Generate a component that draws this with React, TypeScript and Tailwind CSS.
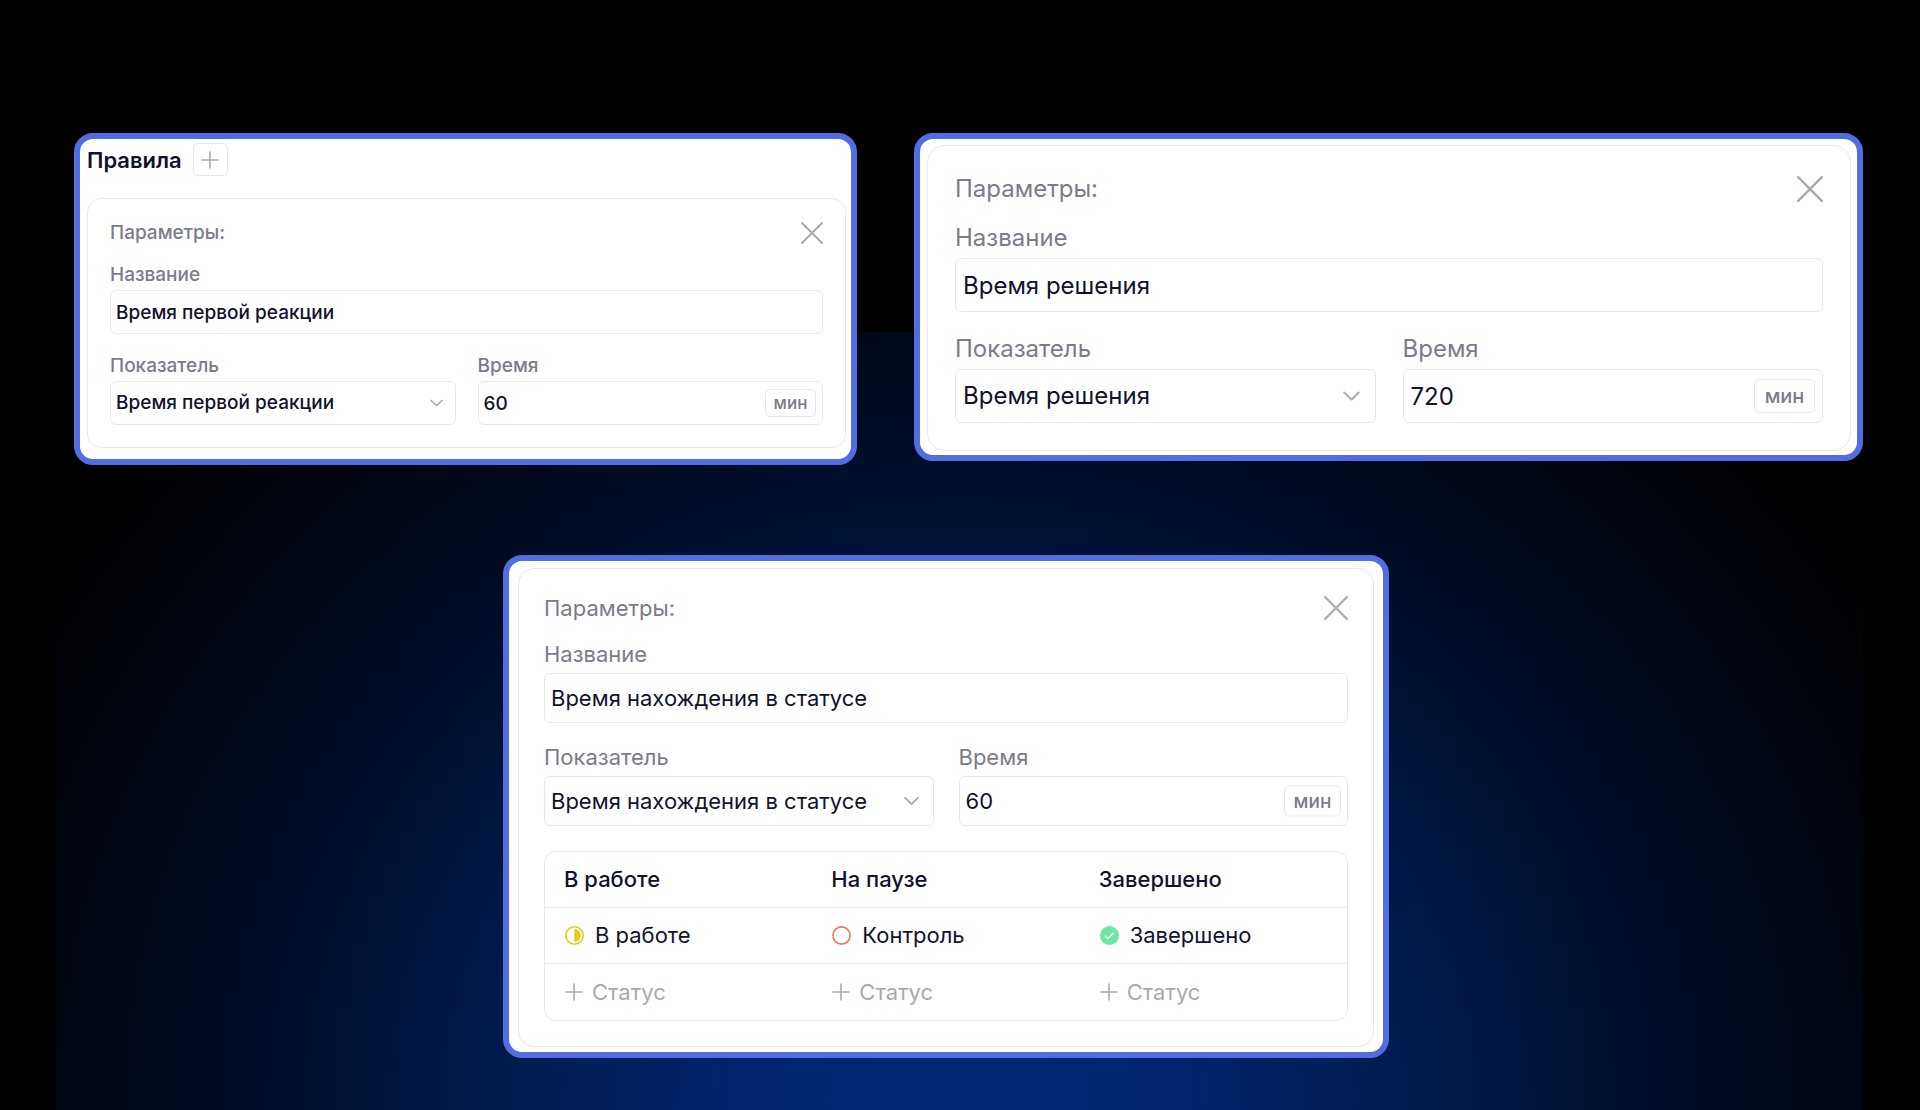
import type { ReactNode } from 'react'

const sizes = {
  sm: {
    text: 'text-[19px] leading-6 font-[450]',
    header: 'h-6',
    panel: 'rounded-[14px] px-[22px] pt-[22px] pb-[22px]',
    gap: 'gap-[22px]',
    name: 'mt-[18px]',
    row: 'mt-[20px]',
    label: 'mb-[3px] h-6',
    input: 'h-11 px-[5px]',
    badge: 'right-[7px] h-7 w-[51px] text-[17px]',
    chevron: 'right-[13px] w-[13px]',
    close: 'size-[22px]',
  },
  md: {
    text: 'text-[22px] leading-7',
    header: 'h-6',
    panel: 'rounded-[16px] px-[25px] pt-[27px] pb-[25px]',
    gap: 'gap-[25px]',
    name: 'mt-[20px]',
    row: 'mt-[20px]',
    label: 'mb-[5px] h-7',
    input: 'h-[50px] px-[6px]',
    badge: 'right-[7px] h-[31px] w-[57px] text-[19px]',
    chevron: 'right-[15px] w-[15px]',
    close: 'size-6',
  },
  lg: {
    text: 'text-[24px] leading-8',
    header: 'h-[26px]',
    panel: 'rounded-[18px] px-[27px] pt-[30px] pb-[27px]',
    gap: 'gap-[27px]',
    name: 'mt-[20px]',
    row: 'mt-[21px]',
    label: 'mb-[4px] h-8',
    input: 'h-[54px] px-[7px]',
    badge: 'right-[8px] h-[34px] w-[61px] text-xl',
    chevron: 'right-[16px] w-[17px]',
    close: 'size-[26px]',
  },
}

type Size = keyof typeof sizes

function CloseIcon({ className }: { className: string }) {
  return (
    <svg viewBox="0 0 22 22" fill="none" stroke="#a9a9b4" strokeWidth="2" strokeLinecap="round" className={className}>
      <path d="M1 1l20 20M21 1L1 21" />
    </svg>
  )
}

function PlusIcon() {
  return (
    <svg viewBox="0 0 18 18" fill="none" stroke="#a9a9b4" strokeWidth="1.6" strokeLinecap="round" className="size-[18px] shrink-0">
      <path d="M9 1v16M1 9h16" />
    </svg>
  )
}

function HalfIcon() {
  return (
    <svg viewBox="0 0 19 19" className="size-[19px] shrink-0">
      <circle cx="9.5" cy="9.5" r="8.7" fill="none" stroke="#ecc41f" strokeWidth="1.6" />
      <path d="M9.3 3a6.5 6.5 0 0 1 0 13z" fill="#ecc41f" />
    </svg>
  )
}

function EmptyIcon() {
  return (
    <svg viewBox="0 0 19 19" className="size-[19px] shrink-0">
      <circle cx="9.5" cy="9.5" r="8.6" fill="none" stroke="#e57864" strokeWidth="1.6" />
    </svg>
  )
}

function DoneIcon() {
  return (
    <svg viewBox="0 0 19 19" className="size-[19px] shrink-0">
      <circle cx="9.5" cy="9.5" r="9.5" fill="#70e6a0" />
      <path d="M5.3 10l2.6 2.6 5.6-5.6" fill="none" stroke="#fff" strokeWidth="1.4" strokeLinecap="round" strokeLinejoin="round" />
    </svg>
  )
}

const statuses = [
  { group: 'В работе', name: 'В работе', icon: <HalfIcon /> },
  { group: 'На паузе', name: 'Контроль', icon: <EmptyIcon /> },
  { group: 'Завершено', name: 'Завершено', icon: <DoneIcon /> },
]

function StatusTable() {
  return (
    <div className="mt-[25px] overflow-hidden rounded-xl border border-[#e8e8ea]">
      <table className="w-full table-fixed text-left">
        <thead>
          <tr className="h-[55px] border-b border-[#e8e8ea]">
            {statuses.map((s) => (
              <th key={s.group} className="px-[19px] font-medium">
                {s.group}
              </th>
            ))}
          </tr>
        </thead>
        <tbody>
          <tr className="h-14 border-b border-[#e8e8ea]">
            {statuses.map((s) => (
              <td key={s.group} className="px-5">
                <span className="flex items-center gap-[11px]">
                  {s.icon}
                  {s.name}
                </span>
              </td>
            ))}
          </tr>
          <tr className="h-[57px]">
            {statuses.map((s) => (
              <td key={s.group} className="px-5">
                <button type="button" className="flex items-center gap-[9px] text-[#a9a9b4]">
                  <PlusIcon />
                  Статус
                </button>
              </td>
            ))}
          </tr>
        </tbody>
      </table>
    </div>
  )
}

interface RuleProps {
  id: string
  size: Size
  name: string
  time: string
  children?: ReactNode
}

function RulePanel({ id, size, name, time, children }: RuleProps) {
  const s = sizes[size]
  const field = `block w-full rounded-[6px] border border-[#e8e8ea] bg-white outline-none ${s.input}`
  const label = `flex items-center text-[#7b7b8b] ${s.label}`

  return (
    <section className={`border border-[#e8e8ea] ${s.panel} ${s.text}`}>
      <div className={`flex items-center justify-between ${s.header}`}>
        <h3 className="font-[inherit] text-[#7b7b8b]">Параметры:</h3>
        <button type="button" aria-label="Закрыть">
          <CloseIcon className={s.close} />
        </button>
      </div>

      <div className={s.name}>
        <label htmlFor={`${id}-name`} className={label}>
          Название
        </label>
        <input id={`${id}-name`} defaultValue={name} className={field} />
      </div>

      <div className={`grid grid-cols-2 ${s.gap} ${s.row}`}>
        <div>
          <label htmlFor={`${id}-metric`} className={label}>
            Показатель
          </label>
          <div className="relative">
            <select id={`${id}-metric`} className={`appearance-none ${field}`}>
              <option>{name}</option>
            </select>
            <svg
              viewBox="0 0 14 8"
              fill="none"
              stroke="#a9a9b4"
              strokeWidth="1.7"
              strokeLinecap="round"
              strokeLinejoin="round"
              className={`pointer-events-none absolute top-1/2 -translate-y-1/2 ${s.chevron}`}
            >
              <path d="M1 1l6 6 6-6" />
            </svg>
          </div>
        </div>
        <div>
          <label htmlFor={`${id}-time`} className={label}>
            Время
          </label>
          <div className="relative">
            <input id={`${id}-time`} defaultValue={time} className={field} />
            <span
              className={`absolute top-1/2 flex -translate-y-1/2 items-center justify-center rounded-[5px] border border-[#e8e8ea] font-medium text-[#7b7b8b] ${s.badge}`}
            >
              мин
            </span>
          </div>
        </div>
      </div>

      {children}
    </section>
  )
}

function Card({ className, children }: { className: string; children: ReactNode }) {
  return <article className={`rounded-[19px] border-6 border-[#526de2] bg-white ${className}`}>{children}</article>
}

export default function App() {
  return (
    <main className="relative min-h-screen bg-black pt-[133px] pr-[57px] pb-[52px] pl-[74px] font-['Inter',sans-serif] text-[#12122a]">
      <div
        aria-hidden="true"
        className="absolute top-[332px] right-[57px] bottom-0 left-14 bg-[radial-gradient(ellipse_60%_130%_at_50%_100%,#002874_0%,#00256e_20%,#001b4e_42%,#001236_57%,#000b20_70%,#00040e_86%,#000000_100%)]"
      />

      <div className="relative grid grid-cols-[783fr_949fr] items-start gap-[57px]">
        <Card className="pt-[4px] pr-[5px] pb-[11px] pl-[7px]">
          <div className="mb-[22px] flex items-center gap-[11px]">
            <h2 className="text-[22px] leading-7 font-semibold">Правила</h2>
            <button
              type="button"
              aria-label="Добавить правило"
              className="flex h-[33px] w-[35px] items-center justify-center rounded-[5px] border border-[#e8e8ea]"
            >
              <PlusIcon />
            </button>
          </div>
          <RulePanel id="reaction" size="sm" name="Время первой реакции" time="60" />
        </Card>
        <Card className="pt-[6px] pr-[6px] pb-[4px] pl-[7px]">
          <RulePanel id="solution" size="lg" name="Время решения" time="720" />
        </Card>
      </div>

      <div className="relative mt-[90px] grid grid-cols-[429fr_886fr_474fr]">
        <Card className="col-start-2 pt-[7px] pr-[9px] pb-[5px] pl-[9px]">
          <RulePanel id="status" size="md" name="Время нахождения в статусе" time="60">
            <StatusTable />
          </RulePanel>
        </Card>
      </div>
    </main>
  )
}
